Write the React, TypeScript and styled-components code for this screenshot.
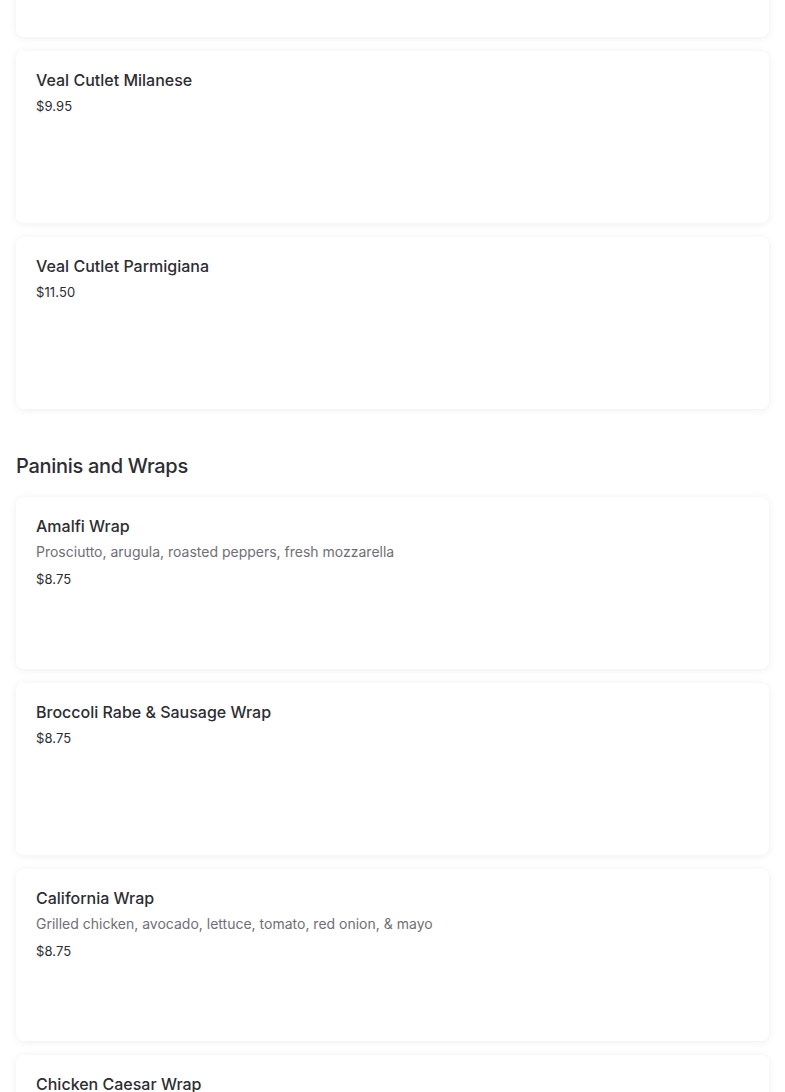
import React from "react";
import styled, { createGlobalStyle } from "styled-components";

const Global = createGlobalStyle`
  html, body { margin: 0; padding: 0; background: #ffffff; }
  body { font-family: "Inter", "Lato", "Liberation Sans", sans-serif; -webkit-font-smoothing: antialiased; }
  * { box-sizing: border-box; }
`;

const Page = styled.div`
  padding: 0 16px;
  margin-top: -135px;
  display: flex;
  flex-direction: column;
`;

const Section = styled.section`
  display: flex;
  flex-direction: column;
  gap: 14px;
`;

const SectionTitle = styled.h2`
  margin: 44px 0 18px;
  font-size: 20px;
  line-height: 26px;
  font-weight: 500;
  color: #2d2d33;
  letter-spacing: -0.3px;
`;

const Card = styled.div`
  background: #fff;
  border-radius: 8px;
  box-shadow: 0 1px 8px rgba(0, 0, 0, 0.07);
  height: 172px;
  padding: 19px 20px;
  display: flex;
  flex-direction: column;
`;

const ItemName = styled.div`
  font-size: 16px;
  line-height: 20px;
  font-weight: 500;
  color: #2d2d33;
  letter-spacing: 0;
`;

const ItemDesc = styled.div`
  margin-top: 6px;
  font-size: 14px;
  line-height: 20px;
  color: #6f6f75;
  letter-spacing: 0;
`;

const Price = styled.div<{ $gap: number }>`
  margin-top: ${(p) => p.$gap}px;
  font-size: 13px;
  line-height: 20px;
  color: #2d2d33;
  letter-spacing: 0.1px;
`;

type Item = { name: string; desc?: string; price: string };

const veal: Item[] = [
  { name: "Veal Cutlet Milanese", price: "$9.95" },
  { name: "Veal Cutlet Parmigiana", price: "$11.50" },
];

const wraps: Item[] = [
  { name: "Amalfi Wrap", desc: "Prosciutto, arugula, roasted peppers, fresh mozzarella", price: "$8.75" },
  { name: "Broccoli Rabe & Sausage Wrap", price: "$8.75" },
  { name: "California Wrap", desc: "Grilled chicken, avocado, lettuce, tomato, red onion, & mayo", price: "$8.75" },
  { name: "Chicken Caesar Wrap", price: "$8.75" },
];

function MenuCard({ item }: { item: Item }) {
  return (
    <Card>
      <ItemName>{item.name}</ItemName>
      {item.desc && <ItemDesc>{item.desc}</ItemDesc>}
      <Price $gap={item.desc ? 7 : 6}>{item.price}</Price>
    </Card>
  );
}

export default function App() {
  return (
    <>
      <Global />
      <Page>
        <Section>
          <Card aria-hidden />
          {veal.map((i) => (
            <MenuCard key={i.name} item={i} />
          ))}
        </Section>
        <SectionTitle>Paninis and Wraps</SectionTitle>
        <Section>
          {wraps.map((i) => (
            <MenuCard key={i.name} item={i} />
          ))}
        </Section>
      </Page>
    </>
  );
}
